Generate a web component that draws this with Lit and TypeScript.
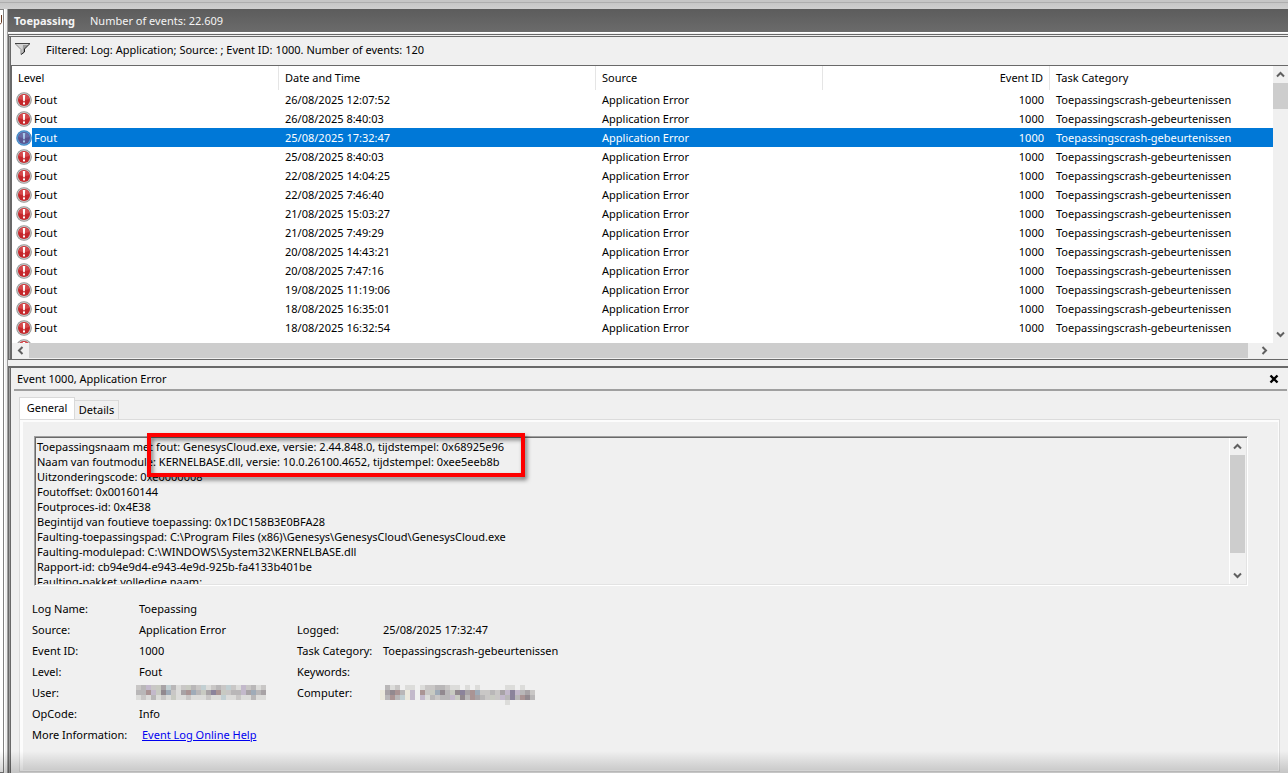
import { LitElement, html, svg, css } from "lit";
import { customElement, property } from "lit/decorators.js";
import { classMap } from "lit/directives/class-map.js";

const events = [
  "26/08/2025 12:07:52",
  "26/08/2025 8:40:03",
  "25/08/2025 17:32:47",
  "25/08/2025 8:40:03",
  "22/08/2025 14:04:25",
  "22/08/2025 7:46:40",
  "21/08/2025 15:03:27",
  "21/08/2025 7:49:29",
  "20/08/2025 14:43:21",
  "20/08/2025 7:47:16",
  "19/08/2025 11:19:06",
  "18/08/2025 16:35:01",
  "18/08/2025 16:32:54",
];
const selectedRow = 2;

const message = [
  "Toepassingsnaam met fout: GenesysCloud.exe, versie: 2.44.848.0, tijdstempel: 0x68925e96",
  "Naam van foutmodule: KERNELBASE.dll, versie: 10.0.26100.4652, tijdstempel: 0xee5eeb8b",
  "Uitzonderingscode: 0xe0000008",
  "Foutoffset: 0x00160144",
  "Foutproces-id: 0x4E38",
  "Begintijd van foutieve toepassing: 0x1DC158B3E0BFA28",
  "Faulting-toepassingspad: C:\\Program Files (x86)\\Genesys\\GenesysCloud\\GenesysCloud.exe",
  "Faulting-modulepad: C:\\WINDOWS\\System32\\KERNELBASE.dll",
  "Rapport-id: cb94e9d4-e943-4e9d-925b-fa4133b401be",
  "Faulting-pakket volledige naam:",
].join("\n");

/* Mosaic rows: one letter per block, "." is empty. */
const tones: Record<string, string> = {
  a: "#dcdcda", b: "#c9c7c6", c: "#b9b7b8", d: "#a8a3a6", e: "#92898f",
  r: "#aa9494", p: "#c3b9cb", u: "#9fabb8", g: "#c8cac2", t: "#c2cfd2", y: "#ebe9dd", v: "#8b839b",
};
const userMosaic = [
  "bcpbgdtcabgcbtabcbtbapbcab",
  "ccrpgeubadrucgdvrgbccpducd",
  "abacabagaabaaabaataabaacaa",
];
const computerMosaic = [
  ".cab.aa.abbccbaa.a.a.....aa.a..",
  "ydercyp.rbguecgevdrubbcbdpvpcdb",
  "ycrctyp.pacbccpgecrdcbgbpcvcrec",
  ".........................a.....",
];

const arrow = (d: string) => html`<svg class="arrow" width="9" height="9" viewBox="0 0 9 9" aria-hidden="true">
  <path d=${d} fill="none" stroke="#606060" stroke-width="2"></path></svg>`;
const up = "M1 6.5L4.5 3L8 6.5";
const down = "M1 2.5L4.5 6L8 2.5";
const left = "M6.5 1L3 4.5L6.5 8";
const right = "M2.5 1L6 4.5L2.5 8";

@customElement("error-icon")
class ErrorIcon extends LitElement {
  @property({ type: Boolean }) selected = false;
  static styles = css`
    :host { display: block; width: 16px; height: 16px; flex: none; }
    svg { display: block; }
  `;
  render() {
    const s = this.selected;
    return html`<svg width="16" height="16" viewBox="0 0 16 16" aria-hidden="true">
      <circle cx="8" cy="8" r="7.8" fill=${s ? "#3f86c4" : "#949494"}></circle>
      <circle cx="8" cy="8" r="6.9" fill=${s ? "#5e9bd2" : "#c6c6c6"}></circle>
      <circle cx="8" cy="8" r="6" fill=${s ? "#5a5590" : "#c5272b"}></circle>
      <path d="M2.6 7A5.5 5.5 0 0 1 13.4 7Q8 9 2.6 7Z" fill=${s ? "#6a6aa4" : "#d6494c"}></path>
      <path d="M6.8 3H9.2L8.8 9.2H7.2Z" fill=${s ? "#a5c8ea" : "#fff"}></path>
      <rect x="7" y="10.4" width="2" height="2" fill=${s ? "#a5c8ea" : "#fff"}></rect>
    </svg>`;
  }
}

@customElement("pixel-mosaic")
class PixelMosaic extends LitElement {
  @property({ attribute: false }) rows: string[] = [];
  static styles = css`
    :host { display: block; height: 15px; margin-left: -3px; }
    svg { display: block; overflow: visible; }
  `;
  render() {
    return html`<svg width=${this.rows[0].length * 5} height="15" shape-rendering="crispEdges" aria-hidden="true">
      ${this.rows.flatMap((row, y) => [...row].map((c, x) => tones[c]
        ? svg`<rect x=${x * 5} y=${y * 5} width="5" height="5" fill=${tones[c]}></rect>` : null))}
    </svg>`;
  }
}

@customElement("event-list")
class EventList extends LitElement {
  static styles = css`
    :host { display: grid; grid-template-columns: minmax(0, 1fr) 15px; border-left: 1px solid #696969; background: #fff; }
    .rows { height: 277px; overflow: hidden; }
    table { width: 100%; table-layout: fixed; border-collapse: separate; border-spacing: 0; }
    th, td { padding: 0 6px; text-align: left; font-weight: 400; white-space: nowrap; overflow: hidden; }
    th { height: 22px; padding-bottom: 2px; border-right: 1px solid #e5e5e5; }
    th:last-child { border-right: 0; }
    td { height: 19px; }
    .level { width: 254px; }
    .date { width: 304px; }
    .source { width: 214px; }
    .id { width: 214px; text-align: right; }
    .cell { padding: 0 0 0 4px; }
    .lvl { display: flex; align-items: center; height: 19px; }
    .lvl span { flex: 1; padding-left: 2px; line-height: 19px; }
    .sel td:not(.cell), .sel .lvl span { background: #0078d7; color: #fff; }
    button { display: grid; place-items: center; width: 100%; height: 17px; border: 0; padding: 0; background: none; }
    .vbar { display: flex; flex-direction: column; background: #f0f0f0; }
    .vthumb { height: 26px; background: #cdcdcd; }
    .vspace { flex: 1; }
    .hbar { grid-column: 1 / -1; display: flex; height: 16px; padding-right: 15px; background: #f0f0f0; }
    .hbar button { width: 17px; height: 15px; }
    .hthumb { flex: 1; height: 15px; margin-right: 8px; background: #cdcdcd; }
  `;
  render() {
    return html`
      <div class="rows">
        <table>
          <thead><tr>
            <th class="level">Level</th><th class="date">Date and Time</th><th class="source">Source</th>
            <th class="id">Event ID</th><th>Task Category</th>
          </tr></thead>
          <tbody>
            ${events.map((date, i) => html`<tr class=${classMap({ sel: i === selectedRow })}>
              <td class="cell"><div class="lvl"><error-icon ?selected=${i === selectedRow}></error-icon><span>Fout</span></div></td>
              <td>${date}</td><td>Application Error</td><td class="id">1000</td><td>Toepassingscrash-gebeurtenissen</td>
            </tr>`)}
            <tr><td class="cell" colspan="5"><div class="lvl"><error-icon></error-icon></div></td></tr>
          </tbody>
        </table>
      </div>
      <div class="vbar">
        <button aria-label="Scroll up">${arrow(up)}</button>
        <div class="vthumb"></div><div class="vspace"></div>
        <button aria-label="Scroll down">${arrow(down)}</button>
      </div>
      <div class="hbar">
        <button aria-label="Scroll left">${arrow(left)}</button>
        <div class="hthumb"></div>
        <button aria-label="Scroll right">${arrow(right)}</button>
      </div>`;
  }
}

@customElement("event-details")
class EventDetails extends LitElement {
  static styles = css`
    :host { display: flex; flex-direction: column; flex: 1; }
    button { font: inherit; color: inherit; border: 0; padding: 0; background: none; }
    .title { display: flex; align-items: center; justify-content: space-between; height: 21px; margin: 0 1px 0 3px; padding: 0 8px 0 3px; border-bottom: 2px solid #a0a0a0; }
    .title h2 { margin: 0; font-size: 11px; font-weight: 400; }
    .close { display: grid; place-items: center; width: 10px; height: 12px; }
    .tabs { display: flex; align-items: flex-end; height: 28px; margin: 0 8px; }
    .tab { box-sizing: border-box; border: 1px solid #d9d9d9; border-bottom: 0; height: 19px; width: 44px; padding-bottom: 2px; border-left: 0; background: #f0f0f0; }
    .tab.on { height: 22px; width: 56px; border-left: 1px solid #d9d9d9; background: #fff; }
    .page { flex: 1; margin: 0 8px 1px; border: 1px solid #dcdcdc; padding: 16px 31px 0 14px; box-shadow: inset 1px 1px #fcfcfc, inset -1px -1px #fcfcfc, inset 3px 2px #fcfcfc; }
    .message { position: relative; display: flex; height: 146px; border: 1px solid; border-color: #a0a0a0 #fff #fff #a0a0a0; box-shadow: inset 1px 1px #696969, inset -1px -1px #e3e3e3; padding: 1px; }
    textarea { flex: 1; margin: 0; border: 0; padding: 1px 1px 0; resize: none; outline: 0; overflow: hidden; background: none; font: inherit; line-height: 15px; white-space: pre; color: #000; }
    .bar { display: flex; flex-direction: column; width: 15px; margin-right: 1px; border-left: 1px solid #fff; }
    .bar button { display: grid; place-items: center; height: 17px; }
    .thumb { height: 98px; background: #cdcdcd; }
    .space { flex: 1; }
    .mark { position: absolute; left: 112px; top: -4px; box-sizing: border-box; width: 378px; height: 44px; border: 4px solid #fe0000; filter: drop-shadow(2px 3px 2px rgba(0, 0, 0, 0.5)); pointer-events: none; }
    dl { display: grid; grid-template-columns: 107px 158px 86px 1fr; grid-auto-rows: 21px; align-items: center; margin: 12px 0 0 -2px; padding-bottom: 26px; }
    dt, dd { margin: 0; white-space: nowrap; }
    .wide { grid-column: 2 / -1; }
    a { margin-left: 3px; color: #0000f0; text-decoration: underline; }
  `;
  render() {
    return html`
      <div class="title"><h2>Event 1000, Application Error</h2>
        <button class="close" aria-label="Close"><svg width="10" height="10" viewBox="0 0 10 10"><path d="M1.5 1.5L8.5 8.5M8.5 1.5L1.5 8.5" stroke="#000" stroke-width="2.4"></path></svg></button>
      </div>
      <div class="tabs" role="tablist">
        <button class="tab on" role="tab" aria-selected="true">General</button>
        <button class="tab" role="tab" aria-selected="false">Details</button>
      </div>
      <div class="page" role="tabpanel">
        <div class="message">
          <textarea readonly aria-label="Event description" .value=${message}></textarea>
          <div class="bar">
            <button aria-label="Scroll up">${arrow(up)}</button>
            <div class="thumb"></div><div class="space"></div>
            <button aria-label="Scroll down">${arrow(down)}</button>
          </div>
          <div class="mark"></div>
        </div>
        <dl>
          <dt>Log Name:</dt><dd class="wide">Toepassing</dd>
          <dt>Source:</dt><dd>Application Error</dd><dt>Logged:</dt><dd>25/08/2025 17:32:47</dd>
          <dt>Event ID:</dt><dd>1000</dd><dt>Task Category:</dt><dd>Toepassingscrash-gebeurtenissen</dd>
          <dt>Level:</dt><dd>Fout</dd><dt>Keywords:</dt><dd></dd>
          <dt>User:</dt><dd><pixel-mosaic .rows=${userMosaic}></pixel-mosaic></dd><dt>Computer:</dt><dd><pixel-mosaic .rows=${computerMosaic}></pixel-mosaic></dd>
          <dt>OpCode:</dt><dd class="wide">Info</dd>
          <dt>More Information:</dt><dd class="wide"><a href="#help">Event Log Online Help</a></dd>
        </dl>
      </div>`;
  }
}

@customElement("app-root")
class AppRoot extends LitElement {
  static styles = css`
    :host { position: relative; display: grid; grid-template: 9px 1fr / 4px minmax(0, 1fr); column-gap: 3px; min-height: 100vh; overflow: hidden; background: #f0f0f0; color: #000; font: 11px/15px "Noto Sans", "Open Sans", sans-serif; }
    :host::after { content: ""; position: absolute; left: 0; right: 0; bottom: 0; height: 22px; background: linear-gradient(rgba(0, 0, 0, 0), rgba(0, 0, 0, 0.18)); pointer-events: none; }
    .chrome { grid-column: 1 / -1; background: linear-gradient(#c6c6c6 2px, #aeaeae 2px, #aeaeae 3px, #c6c6c6 3px, #cfcfcf); }
    .tree { border: 1px solid #828282; border-left: 0; padding-top: 5px; background: #fff; box-shadow: 1px 0 #fff; }
    .tree svg { display: block; }
    .main { display: flex; flex-direction: column; border-left: 1px solid #a0a0a0; }
    .head { display: flex; align-items: center; gap: 15px; height: 23px; padding-left: 6px; border-bottom: 1px solid #fff; background: linear-gradient(#5c5c5c, #6b6b6b); color: #f4f4f4; }
    .head h1 { margin: 0; font-size: 11px; font-weight: 700; }
    .list, .details { padding-left: 2px; border-left: 1px solid #696969; box-shadow: inset 1px 0 #a0a0a0, inset 2px 0 #696969; }
    .list { margin-top: 1px; border-top: 3px double #696969; border-bottom: 1px solid #696969; }
    .filter { display: flex; align-items: center; gap: 16px; height: 24px; padding: 0 0 4px 4px; border-bottom: 1px solid #696969; }
    .filter svg { display: block; }
    .details { display: flex; flex: 1; margin-top: 6px; border-top: 2px solid #696969; }
  `;
  render() {
    return html`
      <div class="chrome"></div>
      <div class="tree"><svg width="2" height="10" viewBox="0 0 2 10" aria-hidden="true"><path d="M1.5 0V7.5L0 9.5" fill="none" stroke="#6a3a20"></path></svg></div>
      <main class="main">
        <header class="head"><h1>Toepassing</h1><span>Number of events: 22.609</span></header>
        <section class="list">
          <div class="filter">
            <svg width="15" height="12" viewBox="0 0 15 12" aria-hidden="true">
              <path d="M0.5 1H14.5L9 6.5V9.5L6 11V6.5Z" fill="#d4d4d4"></path>
              <path d="M8 2H13L9 6.5V9.5L7.5 10.5Z" fill="#9a9a9a"></path>
              <path d="M0 .5H15" stroke="#444"></path>
              <path d="M.5 1L6 6.5V11.5" fill="none" stroke="#8a8a8a"></path>
              <path d="M14.5 1L9.5 6V9L6 11.5" fill="none" stroke="#222"></path>
            </svg>
            <span>Filtered: Log: Application; Source: ; Event ID: 1000. Number of events: 120</span>
          </div>
          <event-list></event-list>
        </section>
        <section class="details"><event-details></event-details></section>
      </main>`;
  }
}
